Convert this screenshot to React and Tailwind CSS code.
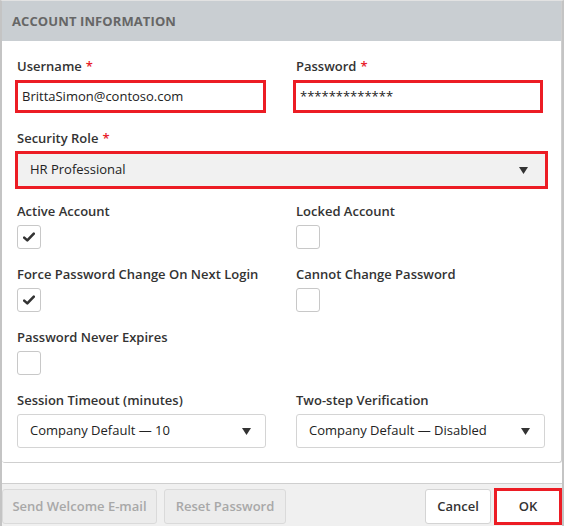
import React from "react";

const font = { fontFamily: '"Open Sans", "Noto Sans", sans-serif' };

function Label({ children, req }) {
  return (
    <div className="text-[13px] font-semibold text-[#333] leading-[18px]">
      {children}
      {req && <span className="text-[#e8202a] ml-1">*</span>}
    </div>
  );
}

function Check({ checked }) {
  return (
    <div className="w-[24px] h-[24px] border border-[#c8c8c8] rounded-[3px] bg-white flex items-center justify-center">
      {checked && (
        <svg width="12" height="10" viewBox="0 0 12 10">
          <path d="M1.2 5.6 L4.3 8.4 L10.8 1.6" stroke="#333" strokeWidth="2.6" fill="none" strokeLinecap="round" strokeLinejoin="round" />
        </svg>
      )}
    </div>
  );
}

function Arrow() {
  return (
    <svg width="9" height="7" viewBox="0 0 9 7">
      <path d="M0 0 H9 L4.5 7 Z" fill="#333" />
    </svg>
  );
}

export default function App() {
  return (
    <div style={font} className="w-[564px] h-[526px] bg-white border-l-2 border-r-2 border-[#c4c4c4] border-t border-t-[#e2e2e2] flex flex-col">
      <div className="h-[462px] border-r border-b border-[#cfcfcf] rounded-b-[3px] flex flex-col">
        <div className="h-[40px] bg-[#c9ced2] flex items-center pl-[10px] pt-[1px] text-[13px] font-bold text-[#666] tracking-[0.1px]">
          ACCOUNT INFORMATION
        </div>
        <div className="px-[13px] pt-[16px]">
          <div className="grid grid-cols-[278px_1fr]">
            <div>
              <div className="pl-[2px]"><Label req>Username</Label></div>
              <div className="mt-[5px] w-[251px] h-[33px] border-[3px] border-[#ec1c24] flex items-center pl-[4px] text-[13px] text-[#222]">
                BrittaSimon@contoso.com
              </div>
            </div>
            <div>
              <div className="pl-[3px]"><Label req>Password</Label></div>
              <div className="mt-[5px] w-[250px] h-[33px] border-[3px] border-[#ec1c24] flex items-center pl-[4px] text-[13px] text-[#222]">
                *************
              </div>
            </div>
          </div>
          <div className="mt-[16px] pl-[2px]"><Label req>Security Role</Label></div>
          <div className="mt-[4px] w-[533px] h-[38px] border-[3px] border-[#ec1c24] bg-[#f1f1f1] flex items-center justify-between pl-[12px] pr-[17px] text-[13px] text-[#222]">
            <span>HR Professional</span>
            <Arrow />
          </div>
          <div className="grid grid-cols-[279px_1fr] pl-[2px] mt-[13px] gap-y-[16px]">
            <div>
              <Label>Active Account</Label>
              <div className="mt-[5px]"><Check checked /></div>
            </div>
            <div>
              <Label>Locked Account</Label>
              <div className="mt-[5px]"><Check /></div>
            </div>
            <div>
              <Label>Force Password Change On Next Login</Label>
              <div className="mt-[5px]"><Check checked /></div>
            </div>
            <div>
              <Label>Cannot Change Password</Label>
              <div className="mt-[5px]"><Check /></div>
            </div>
            <div>
              <Label>Password Never Expires</Label>
              <div className="mt-[5px]"><Check /></div>
            </div>
            <div />
            <div>
              <Label>Session Timeout (minutes)</Label>
              <div className="mt-[5px] w-[249px] h-[34px] border border-[#d4d4d4] rounded-[3px] flex items-center justify-between pl-[12px] pr-[14px] text-[13px] text-[#222]">
                <span>Company Default — 10</span>
                <Arrow />
              </div>
            </div>
            <div>
              <Label>Two-step Verification</Label>
              <div className="mt-[5px] w-[249px] h-[34px] border border-[#d4d4d4] rounded-[3px] flex items-center justify-between pl-[12px] pr-[14px] text-[13px] text-[#222]">
                <span>Company Default — Disabled</span>
                <Arrow />
              </div>
            </div>
          </div>
        </div>
      </div>
      <div className="mt-[20px] flex-1 border-t border-[#cfcfcf] bg-[#f0f0f0] flex items-start pt-[5px]">
        <div className="h-[35px] w-[155px] border border-[#dadada] rounded-[3px] bg-[#ececec] text-[#a8a8a8] text-[13px] font-semibold flex items-center justify-center">
          Send Welcome E-mail
        </div>
        <div className="ml-[7px] h-[35px] w-[122px] border border-[#dadada] rounded-[3px] bg-[#ececec] text-[#a8a8a8] text-[13px] font-semibold flex items-center justify-center">
          Reset Password
        </div>
        <div className="ml-auto h-[35px] w-[66px] border border-[#d4d4d4] rounded-[3px] bg-white text-[#333] text-[13px] font-semibold flex items-center justify-center">
          Cancel
        </div>
        <div className="ml-[3px] -mt-[1px] h-[37px] w-[68px] border-[3px] border-[#ec1c24] bg-white text-[#333] text-[13px] font-semibold flex items-center justify-center">
          OK
        </div>
      </div>
    </div>
  );
}
